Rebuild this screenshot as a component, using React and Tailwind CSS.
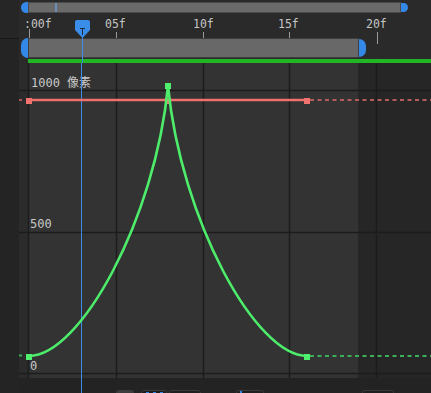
import React from 'react';

const MONO = '"DejaVu Sans Mono", "Noto Sans CJK SC", monospace';

// ruler labels sit over the ticks, 87px apart (5 frames)
const rulerMarks = [
  { label: ':00f', tick: 10, x: 5, top: 16 },
  { label: '05f', tick: 97, x: 86, top: 19 },
  { label: '10f', tick: 184, x: 174, top: 19 },
  { label: '15f', tick: 270, x: 259, top: 19 },
  { label: '20f', tick: 358, x: 347, top: 19 },
];

const gridX = [9.5, 97.5, 184.5, 270.5, 357.5];
const gridY = [27.5, 169.5, 310.5];

const Ruler = () => (
  <svg width="412" height="25" className="block overflow-visible">
    {rulerMarks.map((m, i) => (
      <g key={i}>
        <text x={m.x} y="15" fill="#c6c6c6" fontSize="11.5" fontFamily={MONO}>
          {m.label}
        </text>
        <line
          x1={m.tick + 0.5}
          x2={m.tick + 0.5}
          y1={m.top}
          y2={i === 4 ? 31 : 25}
          stroke="#9a9a9a"
          strokeWidth="1"
        />
      </g>
    ))}
  </svg>
);

const Graph = () => (
  <svg width="412" height="315" className="block">
    <rect x="0" y="0" width="9" height="315" fill="#2b2b2b" />
    <rect x="9" y="0" width="330" height="315" fill="#333333" />
    <rect x="339" y="0" width="73" height="315" fill="#262626" />

    {gridY.map((y) => (
      <line key={y} x1="0" x2="412" y1={y} y2={y} stroke="#1c1c1c" strokeWidth="1.5" />
    ))}
    {gridX.map((x) => (
      <line key={x} x1={x} x2={x} y1="0" y2="315" stroke="#1c1c1c" strokeWidth="1.5" />
    ))}

    <text x="12" y="24" fill="#c8c8c8" fontSize="12" fontFamily={MONO}>1000 像素</text>
    <text x="11" y="165" fill="#c8c8c8" fontSize="12" fontFamily={MONO}>500</text>
    <text x="11" y="307" fill="#c8c8c8" fontSize="12" fontFamily={MONO}>0</text>

    {/* playhead line, under the curves */}
    <line x1="62.5" x2="62.5" y1="0" y2="315" stroke="#3b8de6" strokeWidth="1" />

    {/* red: flat position */}
    <line x1="0" x2="3" y1="37" y2="37" stroke="#a85856" strokeWidth="2" />
    <line x1="9" x2="288" y1="37" y2="37" stroke="#ee716e" strokeWidth="2.5" />
    <line x1="291" x2="412" y1="37" y2="37" stroke="#b45c5a" strokeWidth="2" strokeDasharray="4 3.5" />
    {[10, 149, 288].map((x) => (
      <rect key={x} x={x - 3} y="35" width="6" height="6" fill="#f2726f" />
    ))}

    {/* green: value curve */}
    <line x1="0" x2="3" y1="292.5" y2="292.5" stroke="#3aa856" strokeWidth="2" />
    <path
      d="M10,293 C61,293 136,157 149,23 C162,157 237,293 288,293"
      fill="none"
      stroke="#4ded6b"
      strokeWidth="2.6"
    />
    <line x1="291" x2="412" y1="293" y2="293" stroke="#3cae58" strokeWidth="2" strokeDasharray="4 3.5" />
    {[
      [10, 294],
      [149, 23],
      [288, 294],
    ].map(([x, y]) => (
      <rect key={x} x={x - 3} y={y - 3} width="6" height="6" fill="#4ff06d" />
    ))}
  </svg>
);

const Playhead = () => (
  <div className="pointer-events-none absolute left-[75px] top-[20px] flex w-[15px] flex-col items-center">
    <svg width="15" height="17" className="block">
      <path d="M2,0 H13 Q15,0 15,2 V10 L8.5,17 H6.5 L0,10 V2 Q0,0 2,0 Z" fill="#3a8de8" />
      <rect x="5" y="8" width="5" height="1" fill="#1b2a3f" />
      <rect x="7" y="8" width="1" height="7" fill="#1b2a3f" />
    </svg>
    <div className="h-[26px] w-px bg-[#3b8de6]" />
  </div>
);

export default function App() {
  return (
    <div className="relative flex h-[393px] w-[431px] overflow-hidden bg-[#232323]">
      {/* left gutter */}
      <div className="flex w-[19px] flex-col">
        <div className="h-[39px] border-b border-[#171717] bg-[#262626]" />
        <div className="flex-1 bg-[#242424]" />
      </div>

      <div className="flex flex-1 flex-col bg-[#2a2a2a]">
        {/* zoom scrollbar */}
        <div className="flex h-[13px] pl-[2px] pt-[2px]">
          <div className="flex h-[11px] w-[387px]">
            <div className="w-[7px] rounded-l-full bg-[#3489e8]" />
            <div className="relative flex-1 border border-[#4a4a4a] bg-[#6a6a6a]">
              <div className="absolute left-[26px] top-0 h-full w-[2px] bg-[#6c8fb8]" />
            </div>
            <div className="my-[1px] w-[7px] rounded-r-full bg-[#3489e8]" />
          </div>
        </div>

        <Ruler />

        {/* work area */}
        <div className="flex h-[21px] pl-[2px]">
          <div className="flex h-[20px]">
            <div className="w-[7px] rounded-l-full bg-[#3489e8]" />
            <div className="w-[331px] border border-[#3e3e3e] bg-[#686868]" />
            <div className="my-[1px] w-[7px] rounded-r-full bg-[#3489e8]" />
          </div>
        </div>
        <div className="ml-[9px] h-[4px] bg-[#22b525]" />

        <Graph />

        {/* bottom toolbar */}
        <div className="relative flex h-[15px] items-start overflow-hidden bg-[#232323] pl-[97px] pt-[12px]">
          <div className="absolute left-[62px] top-0 h-full w-px bg-[#3b8de6]" />
          <div className="h-[6px] w-[18px] rounded-t-[3px] bg-[#3c3c3c]" />
          <div className="ml-[7px] flex h-[6px] w-[26px] justify-center gap-[4px] rounded-t-[3px] border border-[#3a3a3a] bg-[#1b1b1b] pt-[1px]">
            <div className="h-[4px] w-[3px] bg-[#2f86e6]" />
            <div className="h-[4px] w-[3px] bg-[#2f86e6]" />
            <div className="h-[4px] w-[3px] bg-[#2f86e6]" />
          </div>
          <div className="ml-[2px] h-[6px] w-[32px] rounded-t-[3px] border border-[#3a3a3a] bg-[#1f1f1f]" />
          <div className="ml-[35px] flex h-[6px] w-[28px] rounded-t-[3px] border border-[#3a3a3a] bg-[#1f1f1f] pl-[3px]">
            <div className="h-[4px] w-[2px] bg-[#2f86e6]" />
          </div>
          <div className="ml-[16px] flex h-[6px] w-[44px] items-end gap-[6px] pt-[1px]">
            <div className="h-[2px] w-[2px] bg-[#777]" />
            <div className="h-[2px] w-[2px] bg-[#777]" />
            <div className="h-[2px] w-[2px] bg-[#777]" />
            <div className="h-[3px] w-[2px] bg-[#888]" />
            <div className="h-[3px] w-[2px] bg-[#888]" />
            <div className="h-[3px] w-[2px] bg-[#888]" />
          </div>
          <div className="ml-[38px] h-[6px] w-[32px] rounded-t-[3px] border border-[#3a3a3a] bg-[#1f1f1f]" />
        </div>
      </div>

      <Playhead />
    </div>
  );
}
